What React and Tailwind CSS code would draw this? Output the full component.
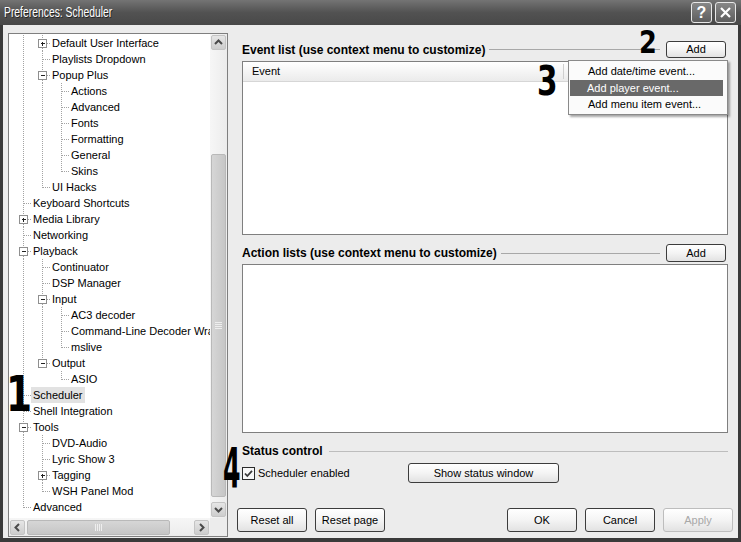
import React from "react";

const rows = [
  [1, "Default User Interface", "plus"],
  [1, "Playlists Dropdown"],
  [1, "Popup Plus", "minus"],
  [2, "Actions"],
  [2, "Advanced"],
  [2, "Fonts"],
  [2, "Formatting"],
  [2, "General"],
  [2, "Skins"],
  [1, "UI Hacks"],
  [0, "Keyboard Shortcuts"],
  [0, "Media Library", "plus"],
  [0, "Networking"],
  [0, "Playback", "minus"],
  [1, "Continuator"],
  [1, "DSP Manager"],
  [1, "Input", "minus"],
  [2, "AC3 decoder"],
  [2, "Command-Line Decoder Wrapper"],
  [2, "mslive"],
  [1, "Output", "minus"],
  [2, "ASIO"],
  [0, "Scheduler", null, true],
  [0, "Shell Integration"],
  [0, "Tools", "minus"],
  [1, "DVD-Audio"],
  [1, "Lyric Show 3"],
  [1, "Tagging", "plus"],
  [1, "WSH Panel Mod"],
  [0, "Advanced"],
];

const XS = [14, 33, 52];

function hasNext(i, k) {
  for (let j = i + 1; j < rows.length; j++) {
    if (rows[j][0] < k) return false;
    if (rows[j][0] === k) return true;
  }
  return false;
}

function TreeRow({ row, i }) {
  const [level, label, exp, sel] = row;
  const xl = XS[level];
  const w = xl + 8;
  const dot = { stroke: "#a3a3a3", strokeWidth: 1, strokeDasharray: "1 1" };
  const parts = [];
  for (let k = 0; k < level; k++) {
    if (hasNext(i, k))
      parts.push(<line key={"v" + k} x1={XS[k] + 0.5} y1={0} x2={XS[k] + 0.5} y2={16} {...dot} />);
  }
  const nx = hasNext(i, level);
  if (exp) {
    parts.push(<line key="t" x1={xl + 0.5} y1={0} x2={xl + 0.5} y2={4} {...dot} />);
    if (nx) parts.push(<line key="b" x1={xl + 0.5} y1={13} x2={xl + 0.5} y2={16} {...dot} />);
    parts.push(<line key="h" x1={xl + 5} y1={8.5} x2={w} y2={8.5} {...dot} />);
    parts.push(
      <rect key="box" x={xl - 3.5} y={4.5} width={8} height={8} fill="white" stroke="#8f8f8f" />
    );
    parts.push(<line key="m" x1={xl - 1.5} y1={8.5} x2={xl + 3} y2={8.5} stroke="#222" />);
    if (exp === "plus")
      parts.push(<line key="p" x1={xl + 0.5} y1={6.5} x2={xl + 0.5} y2={11} stroke="#222" />);
  } else {
    parts.push(<line key="t" x1={xl + 0.5} y1={0} x2={xl + 0.5} y2={nx ? 16 : 9} {...dot} />);
    parts.push(<line key="h" x1={xl + 1} y1={8.5} x2={w} y2={8.5} {...dot} />);
  }
  return (
    <div className="flex h-[16px] items-center">
      <svg width={w} height={16} className="shrink-0" shapeRendering="crispEdges">
        {parts}
      </svg>
      <span
        className={`whitespace-nowrap px-[2px] h-[16px] leading-[16px] text-[11px] text-black ${
          sel ? "bg-[#e2e2e2]" : ""
        }`}
      >
        {label}
      </span>
    </div>
  );
}

function Chevron({ dir }) {
  const d = {
    up: "M3 8 L6.5 4.5 L10 8",
    down: "M3 5 L6.5 8.5 L10 5",
    left: "M8 3 L4.5 6.5 L8 10",
    right: "M5 3 L8.5 6.5 L5 10",
  }[dir];
  return (
    <svg width="13" height="13" viewBox="0 0 13 13">
      <path d={d} fill="none" stroke="#4a4a4a" strokeWidth="2" />
    </svg>
  );
}

function ScrollBtn({ dir }) {
  return (
    <div className="w-[15px] h-[15px] m-px rounded-[2px] border border-[#c4c4c4] bg-gradient-to-b from-[#e6e6e6] to-[#cdcdcd] flex items-center justify-center">
      <Chevron dir={dir} />
    </div>
  );
}

function Btn({ children, className = "", disabled }) {
  return (
    <div
      className={`flex items-center justify-center rounded-[3px] border bg-gradient-to-b from-white via-[#f4f4f4] to-[#e2e2e2] text-[11px] ${
        disabled ? "text-[#a8a8a8] border-[#bdbdbd]" : "text-black border-[#3c3c3c]"
      } ${className}`}
    >
      {children}
    </div>
  );
}

export default function App() {
  return (
    <div className="relative w-[741px] h-[542px] bg-[#3a3a3a] flex flex-col overflow-hidden font-['Liberation_Sans',Arial,sans-serif]">
      {/* Title bar */}
      <div className="h-[25px] shrink-0 flex items-center justify-between bg-gradient-to-b from-[#747474] via-[#525252] to-[#484848] pl-[4px] pr-[5px]">
        <span className="text-white text-[14px] origin-left scale-x-[0.74] whitespace-nowrap [text-shadow:1px_1px_0_#222]">
          Preferences: Scheduler
        </span>
        <div className="flex gap-[3px]">
          <div className="w-[21px] h-[21px] rounded-[3px] border border-[#e8e8e8] bg-gradient-to-b from-[#888] to-[#5e5e5e] flex items-center justify-center text-white text-[16px] font-bold leading-none">
            ?
          </div>
          <div className="w-[21px] h-[21px] rounded-[3px] border border-[#e8e8e8] bg-gradient-to-b from-[#888] to-[#5e5e5e] flex items-center justify-center">
            <svg width="13" height="13" viewBox="0 0 13 13">
              <path d="M2 2 L11 11 M11 2 L2 11" stroke="white" strokeWidth="2.2" />
            </svg>
          </div>
        </div>
      </div>

      {/* Body */}
      <div className="flex-1 mx-[3px] mb-[4px] bg-[#ececec] flex">
        {/* Tree panel */}
        <div className="ml-[5px] mt-[8px] w-[220px] h-[504px] border border-[#7f7f7f] bg-white flex flex-col">
          <div className="flex flex-1 min-h-0">
            <div className="flex-1 overflow-hidden pt-[1px]">
              {rows.map((r, i) => (
                <TreeRow key={i} row={r} i={i} />
              ))}
            </div>
            <div className="w-[17px] flex flex-col bg-gradient-to-r from-[#f6f6f6] to-[#ececec]">
              <ScrollBtn dir="up" />
              <div className="h-[103px]" />
              <div className="h-[343px] mx-px rounded-[2px] border border-[#b9b9b9] bg-gradient-to-r from-[#d6d6d6] to-[#c6c6c6] flex items-center justify-center">
                <svg width="7" height="8" viewBox="0 0 7 8">
                  <path d="M0 0.5H7M0 2.5H7M0 4.5H7M0 6.5H7" stroke="#eeeeee" />
                </svg>
              </div>
              <div className="flex-1" />
              <ScrollBtn dir="down" />
            </div>
          </div>
          <div className="h-[18px] flex">
            <div className="flex-1 flex items-center bg-gradient-to-b from-[#f6f6f6] to-[#ececec]">
              <ScrollBtn dir="left" />
              <div className="ml-px h-[15px] w-[143px] rounded-[2px] border border-[#b9b9b9] bg-gradient-to-b from-[#d6d6d6] to-[#c6c6c6] flex items-center justify-center">
                <svg width="8" height="7" viewBox="0 0 8 7">
                  <path d="M0.5 0V7M2.5 0V7M4.5 0V7M6.5 0V7" stroke="#eeeeee" />
                </svg>
              </div>
              <div className="flex-1" />
              <ScrollBtn dir="right" />
            </div>
            <div className="w-[17px] bg-[#ececec]" />
          </div>
        </div>

        {/* Right column */}
        <div className="ml-[9px] w-[496px] flex flex-col pt-[8px]">
          {/* Event header */}
          <div className="mt-[8px] h-[17px] flex items-center pl-[5px] pr-[7px]">
            <span className="text-[12px] font-bold text-black whitespace-nowrap">
              Event list (use context menu to customize)
            </span>
            <div className="flex-1 h-px bg-[#a8a8a8] ml-[4px] mr-[6px]" />
            <Btn className="w-[60px] h-[17px]">Add</Btn>
          </div>
          <div className="mt-[3px] ml-[5px] w-[486px] h-[174px] border border-[#7f7f7f] bg-white flex flex-col">
            <div className="h-[20px] flex items-center bg-gradient-to-b from-white to-[#ebebeb] border-b border-[#d6d6d6]">
              <div className="w-[320px] pl-[9px] text-[11px] text-black">Event</div>
              <div className="w-px h-[15px] bg-[#cfcfcf]" />
            </div>
          </div>

          {/* Action header */}
          <div className="mt-[9px] h-[18px] flex items-center pl-[5px] pr-[7px]">
            <span className="text-[12px] font-bold text-black whitespace-nowrap">
              Action lists (use context menu to customize)
            </span>
            <div className="flex-1 h-px bg-[#a8a8a8] ml-[4px] mr-[6px]" />
            <Btn className="w-[60px] h-[18px]">Add</Btn>
          </div>
          <div className="mt-[2px] ml-[5px] w-[486px] h-[169px] border border-[#7f7f7f] bg-white" />

          {/* Status control */}
          <div className="mt-[11px] h-[14px] flex items-center pl-[5px] pr-[5px]">
            <span className="text-[12px] font-bold text-black whitespace-nowrap">Status control</span>
            <div className="flex-1 h-px bg-[#bdbdbd] ml-[6px]" />
          </div>
          <div className="mt-[5px] h-[20px] flex items-center pl-[5px]">
            <svg width="13" height="13" viewBox="0 0 13 13" className="shrink-0">
              <rect x="0.5" y="0.5" width="12" height="12" fill="#f7f7f7" stroke="#2a2a2a" />
              <path d="M3 6.5 L5.3 9 L10 3.8" fill="none" stroke="#3a3a3a" strokeWidth="1.8" />
            </svg>
            <span className="ml-[3px] w-[88px] text-[11px] text-black whitespace-nowrap">Scheduler enabled</span>
            <Btn className="ml-[62px] w-[151px] h-[20px]">Show status window</Btn>
          </div>

          {/* Bottom buttons */}
          <div className="mt-[25px] flex justify-between">
            <div className="flex gap-[8px]">
              <Btn className="w-[70px] h-[24px]">Reset all</Btn>
              <Btn className="w-[70px] h-[24px]">Reset page</Btn>
            </div>
            <div className="flex gap-[8px]">
              <Btn className="w-[70px] h-[24px]">OK</Btn>
              <Btn className="w-[70px] h-[24px]">Cancel</Btn>
              <Btn className="w-[70px] h-[24px]" disabled>
                Apply
              </Btn>
            </div>
          </div>
        </div>
      </div>

      {/* Context menu */}
      <div className="absolute left-[568px] top-[60px] w-[160px] h-[55px] bg-[#fbfbfb] border border-[#8a8a8a] shadow-[2px_2px_2px_rgba(0,0,0,0.35)] pt-[2px] text-[11px]">
        <div className="h-[17px] flex items-center pl-[19px] text-black">Add date/time event...</div>
        <div className="h-[16px] flex items-center pl-[17px] ml-[1px] mr-[4px] bg-[#696969] text-white">
          Add player event...
        </div>
        <div className="h-[17px] flex items-center pl-[19px] text-black">Add menu item event...</div>
      </div>

      {/* Annotation numbers */}
      <div className="absolute left-[639px] top-[26px] text-[32px] leading-none font-bold text-black origin-left scale-x-[0.8] font-['DejaVu_Sans',sans-serif]">
        2
      </div>
      <div className="absolute left-[537px] top-[61px] text-[41px] leading-none font-bold text-black origin-left scale-x-[0.72] font-['DejaVu_Sans',sans-serif]">
        3
      </div>
      <div className="absolute left-[6px] top-[369px] text-[50px] leading-none font-bold text-black origin-left scale-x-[0.75] font-['DejaVu_Sans',sans-serif]">
        1
      </div>
      <div className="absolute left-[223px] top-[440px] text-[56px] leading-none font-bold text-black origin-left scale-x-[0.45] font-['DejaVu_Sans',sans-serif]">
        4
      </div>
    </div>
  );
}
